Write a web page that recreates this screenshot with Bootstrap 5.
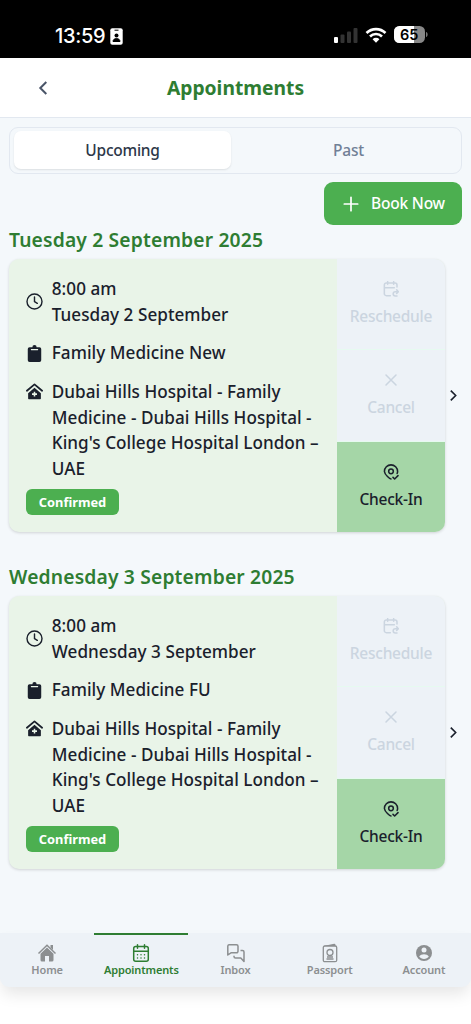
<!DOCTYPE html>
<html lang="en">
<head>
<meta charset="utf-8">
<meta name="viewport" content="width=device-width, initial-scale=1">
<title>Appointments</title>
<link href="https://cdn.jsdelivr.net/npm/bootstrap@5.3.0/dist/css/bootstrap.min.css" rel="stylesheet">
<style>
  body { font-family: "Noto Sans", sans-serif; font-size: 17.13px; line-height: 25.7px; letter-spacing: .04px; font-weight: 500; color: #1a202c; background: #fff; overflow: hidden; }
  svg { display: block; flex: none; }
  .screen { height: 1024px; }
  .status { height: 58px; background: #000; color: #fff; font-family: Inter, sans-serif; padding: 12px 43px 0 55px; }
  .clock { font-size: 20px; line-height: 24px; font-weight: 500; letter-spacing: -.3px; }
  .topbar { height: 60px; background: #fff; border-bottom: 1px solid #e2e8f0; padding: 0 36px; }
  .topbar h1 { font-size: 19.27px; font-weight: 700; color: #2e7d32; letter-spacing: 0; padding-left: 2px; }
  .content { height: 815px; background: #f4f8fb; padding: 9px 9px 0; }
  .tabs { height: 47px; border: 1px solid #e2e8f0; border-radius: 9px; padding: 3px 4px 4px; font-size: 15.5px; letter-spacing: -.25px; }
  .tabs a { color: #718096; text-decoration: none; border-radius: 7px; padding-top: 1px; }
  .tabs a.active { color: #2d3748; background: #fff; box-shadow: 0 1px 2px rgba(0,0,0,.1); }
  .btn-book { width: 138px; height: 43px; margin-top: 8px; background: #4caf50; color: #fff; border: 0; border-radius: 9px; font-size: 15.5px; letter-spacing: -.2px; font-weight: 500; padding: 0; }
  .day { font-size: 19.27px; line-height: 26px; font-weight: 600; letter-spacing: .16px; color: #2e7d32; }
  .visit { width: 436px; height: 273.5px; border-radius: 10px; background: #e9f4e8; box-shadow: 0 1px 3px rgba(0,0,0,.15); overflow: hidden; }
  .info { width: 328px; padding: 17.5px 17px 0; }
  .info .line { gap: 8.8px; margin-bottom: 12.85px; white-space: nowrap; }
  .status-tag { width: 93px; height: 26px; margin-top: -5px; border-radius: 6px; background: #4caf50; color: #fff; font-size: 12.85px; font-weight: 700; letter-spacing: 0; }
  .actions { width: 108px; font-size: 15.5px; line-height: 22px; }
  .actions button { flex: 1 1 0; font-weight: 500; letter-spacing: -.25px; border: 0; border-bottom: 1px solid #e6faf0; padding: 0; gap: 8px; background: #edf2f7; color: #cbd5e0; }
  .actions .go { background: #a5d6a7; color: #1a202c; border-bottom: 0; }
  .bottom { height: 54px; background: #edf2f7; border-radius: 0 0 9px 9px; box-shadow: 0 9px 16px -2px rgba(0,0,0,.1); font-size: 11px; line-height: 14px; font-weight: 600; letter-spacing: -.14px; }
  .bottom a { color: #8c8f91; text-decoration: none; padding-top: 8px; border-top: 2px solid transparent; }
  .bottom a.active { color: #2e7d32; border-color: #2e7d32; }
</style>
</head>
<body>
<svg width="0" height="0" class="position-absolute">
  <symbol id="clock" viewBox="0 0 24 24"><g fill="none" stroke="currentColor" stroke-width="2" stroke-linecap="round"><circle cx="12" cy="12" r="10.6"/><path d="M12 5.5V12l4 2.6"/></g></symbol>
  <symbol id="clip" viewBox="0 0 24 24"><path fill="currentColor" d="M5 3h4a3 3 0 0 1 6 0h4a2.500 2.500 0 0 1 2.500 2.500v16A2.500 2.500 0 0 1 19 24H5a2.500 2.500 0 0 1-2.500-2.500v-16A2.500 2.500 0 0 1 5 3z"/><path fill="none" stroke="#e9f4e8" stroke-width="1.500" stroke-linecap="round" d="M7.500 6.500h9"/></symbol>
  <symbol id="clinic" viewBox="0 0 24 24"><path d="M1.300 11L12 2l10.700 9" fill="none" stroke="currentColor" stroke-width="2.500" stroke-linecap="round" stroke-linejoin="round"/><path fill="currentColor" d="M3 14.300l9-7.700 9 7.700V22a1 1 0 0 1-1 1H4a1 1 0 0 1-1-1z"/><path d="M12 12.200v7M8.500 15.700h7" stroke="#e9f4e8" stroke-width="2.200"/></symbol>
  <symbol id="resched" viewBox="0 0 24 24"><g fill="none" stroke="currentColor" stroke-width="2.300" stroke-linecap="round" stroke-linejoin="round"><path d="M11 22H5a3 3 0 0 1-3-3V6a3 3 0 0 1 3-3h13a3 3 0 0 1 3 3v3M2 10h15M7 1v4M16 1v4M22 16h-3.500a3 3 0 0 0 0 6.500h2.500M20.500 13.200l2.500 2.800-2.500 2.800"/></g></symbol>
  <symbol id="cross" viewBox="0 0 24 24"><path d="M4.500 4.500l15 15M19.500 4.500l-15 15" fill="none" stroke="currentColor" stroke-width="2.300" stroke-linecap="round"/></symbol>
  <symbol id="pin" viewBox="0 0 24 24"><g fill="none" stroke="currentColor" stroke-width="2.300" stroke-linecap="round" stroke-linejoin="round"><circle cx="12" cy="11" r="3.500"/><path d="M12 22.500c-1.300 0-9.500-6.500-9.900-11.300a9.900 9.900 0 1 1 19.800 0q0 1.500-.7 3M15 20l2.500 2.500 5-5"/></g></symbol>
  <symbol id="chev" viewBox="0 0 24 24"><path d="M7 3l9 9-9 9" fill="none" stroke="currentColor" stroke-width="3"/></symbol>
</svg>
<div class="screen">
  <div class="status d-flex justify-content-between align-items-start">
    <div class="d-flex align-items-center mt-2 pt-1">
      <span class="clock">13:59</span>
      <svg style="margin-left:5px" width="13" height="17" viewBox="0 0 13 17"><rect x=".3" y=".3" width="12.400" height="16.400" rx="2" fill="#fff"/><path d="M4.500 2.200h4M3 13.500c0-4 7-4 7 0z" stroke="#000" stroke-width="1"/><circle cx="6.500" cy="7.500" r="2"/></svg>
    </div>
    <div class="d-flex align-items-center" style="margin-top:14px">
      <svg width="24" height="16" viewBox="0 0 24 16"><rect y="10" width="4" height="6" rx="1" fill="#fff"/><g fill="#333"><rect x="6.500" y="7.500" width="4" height="8.500" rx="1"/><rect x="13" y="4.500" width="4" height="11.500" rx="1"/><rect x="19.500" y="1" width="4" height="15" rx="1"/></g></svg>
      <svg style="margin-left:7px" width="22" height="16" viewBox="0 0 22 16"><g fill="none" stroke="#fff" stroke-width="2.600"><path d="M1.500 6a13.500 13.500 0 0 1 19 0M5 9.500a8.500 8.500 0 0 1 12 0"/></g><path fill="#fff" d="M7.600 12.200a4.800 4.800 0 0 1 6.800 0L11 15.700z"/></svg>
      <svg style="margin-left:7px" width="34" height="17" viewBox="0 0 34 17"><defs><clipPath id="cell"><rect width="31" height="17" rx="5.500"/></clipPath></defs><g clip-path="url(#cell)"><rect width="31" height="17" fill="#888"/><rect width="20" height="17" fill="#fff"/></g><path d="M32 6c2.200.5 2.200 4.500 0 5z" fill="#777"/><text x="15.300" y="13.800" text-anchor="middle" font-family="Inter" font-weight="600" font-size="14.500">65</text></svg>
    </div>
  </div>
  <header class="topbar d-flex align-items-center">
    <svg width="14" height="16" viewBox="0 0 14 16"><path d="M10.300 2L4.300 8l6 6" fill="none" stroke="#4a5568" stroke-width="2"/></svg>
    <h1 class="flex-grow-1 text-center mb-0 me-3">Appointments</h1>
  </header>
  <main class="content">
    <nav class="tabs d-flex">
      <a href="#" class="active d-flex flex-fill w-50 align-items-center justify-content-center">Upcoming</a>
      <a href="#" class="d-flex flex-fill w-50 align-items-center justify-content-center" style="margin-left:9px">Past</a>
    </nav>
    <div class="d-flex justify-content-end">
      <button class="btn btn-book d-flex align-items-center justify-content-center"><svg style="margin:0 12px 0 2px" width="16" height="16" viewBox="0 0 16 16"><path d="M8 1.300v13.400M1.300 8h13.400" stroke="#fff" stroke-width="1.700" stroke-linecap="round"/></svg>Book Now</button>
    </div>
    <h2 class="day mb-0" style="margin-top:1.5px">Tuesday 2 September 2025</h2>
    <div class="d-flex align-items-center" style="margin-top:6px">
      <article class="visit d-flex">
        <div class="info">
          <div class="line d-flex align-items-center"><svg width="17" height="17"><use href="#clock"/></svg><div>8:00 am<br>Tuesday 2 September</div></div>
          <div class="line d-flex align-items-center"><svg width="17" height="17"><use href="#clip"/></svg><div>Family Medicine New</div></div>
          <div class="line d-flex"><svg class="mt-1" width="17" height="17"><use href="#clinic"/></svg><div>Dubai Hills Hospital - Family<br>Medicine - Dubai Hills Hospital -<br>King's College Hospital London –<br>UAE</div></div>
          <div class="status-tag d-flex align-items-center justify-content-center">Confirmed</div>
        </div>
        <div class="actions d-flex flex-column">
          <button class="d-flex flex-column align-items-center justify-content-center"><svg width="16" height="16"><use href="#resched"/></svg>Reschedule</button>
          <button class="d-flex flex-column align-items-center justify-content-center"><svg width="16" height="16"><use href="#cross"/></svg>Cancel</button>
          <button class="go d-flex flex-column align-items-center justify-content-center"><svg width="16" height="16"><use href="#pin"/></svg>Check-In</button>
        </div>
      </article>
      <svg style="margin-left:2px" width="13" height="13"><use href="#chev"/></svg>
    </div>
    <h2 class="day mb-0" style="margin-top:31.5px">Wednesday 3 September 2025</h2>
    <div class="d-flex align-items-center" style="margin-top:6px">
      <article class="visit d-flex">
        <div class="info">
          <div class="line d-flex align-items-center"><svg width="17" height="17"><use href="#clock"/></svg><div>8:00 am<br>Wednesday 3 September</div></div>
          <div class="line d-flex align-items-center"><svg width="17" height="17"><use href="#clip"/></svg><div>Family Medicine FU</div></div>
          <div class="line d-flex"><svg class="mt-1" width="17" height="17"><use href="#clinic"/></svg><div>Dubai Hills Hospital - Family<br>Medicine - Dubai Hills Hospital -<br>King's College Hospital London –<br>UAE</div></div>
          <div class="status-tag d-flex align-items-center justify-content-center">Confirmed</div>
        </div>
        <div class="actions d-flex flex-column">
          <button class="d-flex flex-column align-items-center justify-content-center"><svg width="16" height="16"><use href="#resched"/></svg>Reschedule</button>
          <button class="d-flex flex-column align-items-center justify-content-center"><svg width="16" height="16"><use href="#cross"/></svg>Cancel</button>
          <button class="go d-flex flex-column align-items-center justify-content-center"><svg width="16" height="16"><use href="#pin"/></svg>Check-In</button>
        </div>
      </article>
      <svg style="margin-left:2px" width="13" height="13"><use href="#chev"/></svg>
    </div>
  </main>
  <nav class="bottom d-flex">
    <a href="#" class="col d-flex flex-column align-items-center"><svg width="20" height="20" viewBox="0 0 20 20"><path d="M1.500 10.500L10 2.300l8.500 8.200" fill="none" stroke="currentColor" stroke-width="1.500"/><path fill="currentColor" d="M13.500 2H16v5l-2.500-2.400zM3.500 10.800L10 4.600l6.500 6.200V17a1.500 1.500 0 0 1-1.500 1.500h-3V13H8v5.500H5A1.500 1.500 0 0 1 3.500 17z"/></svg>Home</a>
    <a href="#" class="active col d-flex flex-column align-items-center"><svg width="20" height="20" viewBox="0 0 20 20"><g fill="none" stroke="currentColor" stroke-width="1.500" stroke-linecap="round"><rect x="2.700" y="3.500" width="14.600" height="14.700" rx="2"/><path d="M3 8.200h14M6.500 1.700v3.500M13.500 1.700v3.500"/><path d="M6.500 11.800h.01M10 11.800h.01M13.500 11.800h.01M6.500 15h.01M10 15h.01M13.500 15h.01"/></g></svg>Appointments</a>
    <a href="#" class="col d-flex flex-column align-items-center"><svg width="20" height="20" viewBox="0 0 20 20"><path d="M3 1.800h7.500A1.500 1.500 0 0 1 12 3.300v5A1.500 1.500 0 0 1 10.500 9.800H5L1.800 12V3.300A1.500 1.500 0 0 1 3 1.800zM14.500 7.500h2a1.500 1.500 0 0 1 1.500 1.500v9.500L14.800 15H9.500A1.500 1.500 0 0 1 8 13.500V12.700" fill="none" stroke="currentColor" stroke-width="1.500" stroke-linejoin="round"/></svg>Inbox</a>
    <a href="#" class="col d-flex flex-column align-items-center"><svg width="20" height="20" viewBox="0 0 20 20"><g fill="none" stroke="currentColor" stroke-width="1.300"><rect x="3.300" y="3" width="13.400" height="15.700" rx="1.500"/><circle cx="10" cy="9.500" r="3"/><path d="M7 14h6M6.500 16h7"/></g><path fill="currentColor" d="M3.500 3l10.700-2.200q1.300 0 1.300 1.200v1z"/></svg>Passport</a>
    <a href="#" class="col d-flex flex-column align-items-center"><svg width="20" height="20" viewBox="0 0 20 20"><circle cx="10" cy="10" r="8" fill="currentColor"/><circle cx="10" cy="6.900" r="2.500" fill="#edf2f7"/><path d="M5.200 13.500c2-3 7.600-3 9.600 0-2 3.300-7.600 3.300-9.600 0z" fill="#edf2f7"/></svg>Account</a>
  </nav>
</div>
<script src="https://cdn.jsdelivr.net/npm/bootstrap@5.3.0/dist/js/bootstrap.bundle.min.js"></script>
</body>
</html>
